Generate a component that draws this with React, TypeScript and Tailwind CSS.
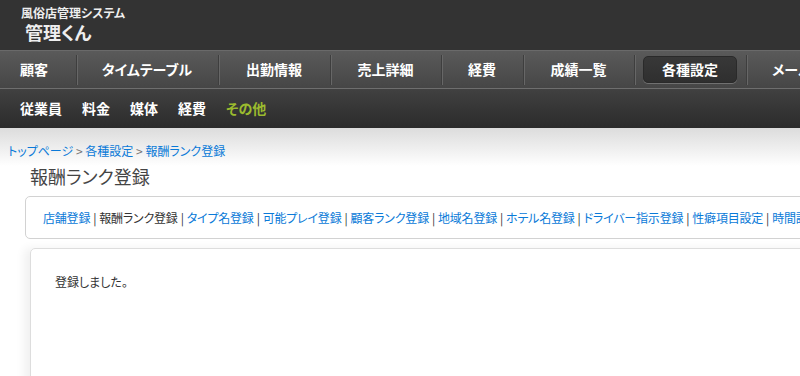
import React from 'react';

const mainNav = [
  { label: '顧客', w: 'w-[76px]', pad: 'justify-start pl-5' },
  { label: 'タイムテーブル', w: 'w-[142px]', pad: 'justify-center' },
  { label: '出勤情報', w: 'w-[112px]', pad: 'justify-center' },
  { label: '売上詳細', w: 'w-[111px]', pad: 'justify-center' },
  { label: '経費', w: 'w-[82px]', pad: 'justify-center' },
  { label: '成績一覧', w: 'w-[111px]', pad: 'justify-center' },
  { label: '各種設定', w: 'w-[112px]', pad: 'justify-center', active: true },
  { label: 'メール設定', w: 'w-[112px]', pad: 'justify-start pl-[26px]' },
];

const subNav = ['従業員', '料金', '媒体', '経費'];

const tabs = [
  { label: '店舗登録', link: true },
  { label: '報酬ランク登録', link: false },
  { label: 'タイプ名登録', link: true },
  { label: '可能プレイ登録', link: true },
  { label: '顧客ランク登録', link: true },
  { label: '地域名登録', link: true },
  { label: 'ホテル名登録', link: true },
  { label: 'ドライバー指示登録', link: true },
  { label: '性癖項目設定', link: true },
  { label: '時間設定', link: true },
];

const Separator = () => (
  <div className="flex h-[30px] self-center">
    <div className="w-px bg-[#3e3e3e]" />
    <div className="w-px bg-[#676767]" />
  </div>
);

export default function App() {
  return (
    <div
      className="w-[800px] h-[376px] overflow-hidden bg-white [font-feature-settings:'palt']"
      style={{ fontFamily: '"Noto Sans CJK JP", "Noto Sans", sans-serif' }}
    >
      {/* Header */}
      <div className="h-[50px] bg-[#333333] pl-[21px] pt-[5px]">
        <div className="text-[12px] leading-[16px] font-bold text-[#eeeeee]">風俗店管理システム</div>
        <div className="text-[18px] leading-[22px] font-bold text-[#eeeeee] pl-1">管理くん</div>
      </div>

      {/* Main nav */}
      <div className="h-[39px] flex border-t border-[#6a6a6a] border-b border-b-[#6e6e6e] bg-gradient-to-b from-[#5a5a5a] to-[#464646] whitespace-nowrap">
        {mainNav.map((item, i) => (
          <React.Fragment key={item.label}>
            {i > 0 && <Separator />}
            <div className={`${item.w} shrink-0 flex items-center ${item.pad} ${i > 0 ? '-ml-[2px]' : ''}`}>
              {item.active ? (
                <div className="w-[94px] h-[27px] rounded-[5px] border border-[#2a2a2a] bg-gradient-to-b from-[#383838] to-[#2f2f2f] shadow-[0_1px_0_#707070] flex items-center justify-center text-[14px] font-bold text-white">
                  {item.label}
                </div>
              ) : (
                <span className="text-[14px] font-bold text-white">{item.label}</span>
              )}
            </div>
          </React.Fragment>
        ))}
      </div>

      {/* Sub nav */}
      <div className="h-[39px] flex items-center gap-5 pl-5 bg-gradient-to-b from-[#414141] to-[#2b2b2b]">
        {subNav.map((s) => (
          <span key={s} className="text-[14px] font-bold text-white">{s}</span>
        ))}
        <span className="text-[14px] font-bold text-[#9bbb2e]">その他</span>
      </div>

      {/* Content */}
      <div className="bg-gradient-to-b from-[#dcdcdc] via-white via-[38px] to-white pt-[16px]">
        <div className="pl-2 text-[12px] leading-[14px] text-[#0a7ad8]">
          トップページ <span className="text-[#777]">&gt;</span> 各種設定 <span className="text-[#777]">&gt;</span> 報酬ランク登録
        </div>
        <h1 className="pl-[30px] mt-[6px] text-[18px] leading-[24px] font-normal text-[#444444]">報酬ランク登録</h1>

        <div className="ml-[25px] mt-[8px] w-[1000px] h-[43px] rounded-[5px] border border-[#d2d2d2] flex items-center pl-[17px] text-[12px] tracking-[-0.2px] whitespace-nowrap">
          {tabs.map((t, i) => (
            <React.Fragment key={t.label}>
              {i > 0 && <span className="text-[#333] mx-[3px]">|</span>}
              <span className={t.link ? 'text-[#0a7ad8]' : 'text-[#333333]'}>{t.label}</span>
            </React.Fragment>
          ))}
        </div>

        <div className="ml-[30px] mt-[9px] w-[1000px] h-[200px] rounded-tl-[5px] border border-[#dddddd] shadow-[-6px_0_10px_rgba(0,0,0,0.06)] pl-[24px] pt-[24px]">
          <p className="text-[12px] leading-[18px] text-[#333333]">登録しました。</p>
        </div>
      </div>
    </div>
  );
}
